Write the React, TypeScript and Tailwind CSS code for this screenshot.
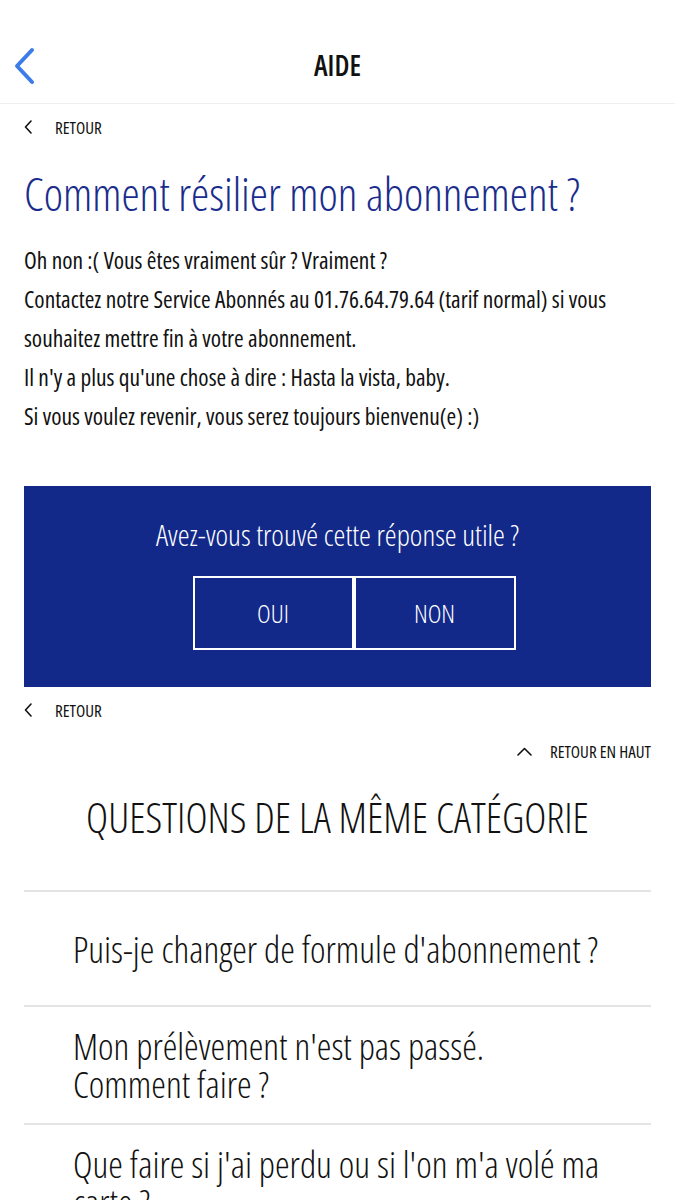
const font = "font-['Open_Sans',sans-serif] font-stretch-condensed";

function Retour() {
  return (
    <div className="flex items-center h-[46px] pl-6 text-[#111]">
      <svg width="8" height="14" viewBox="0 0 8 14" fill="none" className="mr-[23px]">
        <path d="M7 1 L1.5 7 L7 13" stroke="currentColor" strokeWidth="1.6" strokeLinecap="round" strokeLinejoin="round" />
      </svg>
      <span className="text-[17px] leading-none">RETOUR</span>
    </div>
  );
}

const questions = [
  "Puis-je changer de formule d'abonnement ?",
  "Mon prélèvement n'est pas passé.\nComment faire ?",
  "Que faire si j'ai perdu ou si l'on m'a volé ma carte ?",
];

export default function App() {
  return (
    <div className={`h-[1200px] overflow-hidden bg-white ${font} text-[#111]`}>
      {/* Top bar */}
      <div className="relative h-[104px] pt-[26px] border-b border-[#efefef] flex items-center justify-center">
        <button className="absolute left-[12px] top-[47px] text-[#3b7ce9]" aria-label="Retour">
          <svg width="26" height="38" viewBox="0 0 26 38" fill="none">
            <path d="M20 3 L5 19 L20 35" stroke="currentColor" strokeWidth="4" strokeLinecap="round" strokeLinejoin="round" />
          </svg>
        </button>
        <h1 className="text-[28px] font-semibold leading-none">AIDE</h1>
      </div>

      <Retour />

      <div className="px-6">
        <h2 className="mt-[15px] text-[46px] font-light leading-[56px] text-[#1a2d8c]">
          Comment résilier mon abonnement ?
        </h2>
        <div className="mt-[20px] text-[23.4px] leading-[39px]">
          <p>Oh non :( Vous êtes vraiment sûr ? Vraiment ?</p>
          <p>
            Contactez notre Service Abonnés au 01.76.64.79.64 (tarif normal) si vous souhaitez mettre fin à votre abonnement.
          </p>
          <p>Il n'y a plus qu'une chose à dire : Hasta la vista, baby.</p>
          <p>Si vous voulez revenir, vous serez toujours bienvenu(e) :)</p>
        </div>

        {/* Feedback box */}
        <div className="mt-[50px] h-[201px] bg-[#12298a] text-white flex flex-col items-center pt-[31px]">
          <p className="text-[30px] font-[350] leading-[36px]">Avez-vous trouvé cette réponse utile ?</p>
          <div className="flex mt-[23px] ml-[33px]">
            <button className="w-[161px] h-[74px] border-2 border-white text-[26px] font-[350]">OUI</button>
            <button className="w-[162px] h-[74px] border-2 border-white text-[26px] font-[350]">NON</button>
          </div>
        </div>
      </div>

      <Retour />

      <div className="flex items-center justify-end h-[36px] pr-6">
        <svg width="15" height="9" viewBox="0 0 15 9" fill="none" className="mr-[18px]">
          <path d="M1 8 L7.5 1.5 L14 8" stroke="currentColor" strokeWidth="1.6" strokeLinecap="round" strokeLinejoin="round" />
        </svg>
        <span className="text-[17px] leading-none">RETOUR EN HAUT</span>
      </div>

      <h3 className="mt-[18px] text-center text-[42px] font-light leading-[60px]">
        QUESTIONS DE LA MÊME CATÉGORIE
      </h3>

      <div className="mx-6 mt-[43px] border-t-2 border-[#e4e4e4]">
        {questions.map((q) => (
          <div key={q} className="flex items-center min-h-[115px] py-[20px] pl-[49px] pr-4 border-b-2 border-[#e4e4e4]">
            <p className="text-[37px] font-light leading-[38px] whitespace-pre-line">{q}</p>
          </div>
        ))}
      </div>
    </div>
  );
}
